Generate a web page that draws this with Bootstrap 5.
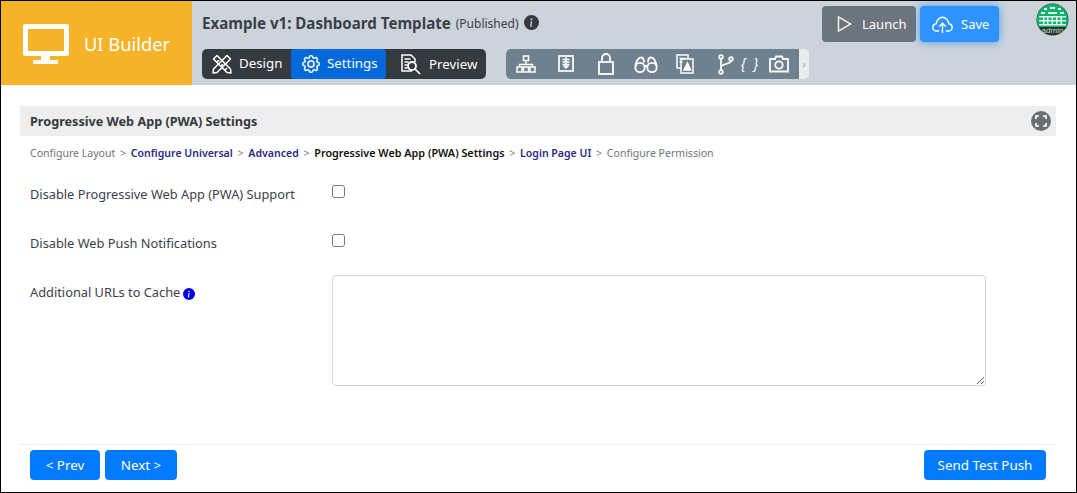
<!DOCTYPE html>
<html lang="en">
<head>
<meta charset="utf-8">
<title>UI Builder</title>
<link rel="stylesheet" href="https://cdn.jsdelivr.net/npm/bootstrap@5.3.0/dist/css/bootstrap.min.css">
<style>
html,body{height:100%;margin:0;overflow:hidden}
body{font-family:"Noto Sans","Open Sans",sans-serif;font-size:12.8px;color:#3b4148;background:#fff}
.app-frame{height:493px;border:1px solid #000;display:flex;flex-direction:column}
.top-head{height:84px;background:#cdd3da;display:flex;flex:none}
.brand-box{width:191px;background:#f4b328;color:#fff;font-size:18.3px;display:flex;align-items:center;gap:15px;padding-left:22px;padding-top:2px}
.head-main{flex:1;padding:0 0 0 10px;display:flex;flex-direction:column;position:relative}
.page-name{font-size:15.1px;font-weight:700;color:#3a4149;height:48px;padding-top:12px;line-height:20px;display:flex;align-items:flex-start;gap:5px}
.page-name small{font-weight:400;font-size:12px;line-height:22px}
.page-name svg{margin-top:2px;margin-left:0}
.tool-rows{display:flex;gap:20px}
.mode-tabs{display:flex;height:30px;background:#343a40;border-radius:5px;color:#fff;font-size:13.3px}
.mode-tab{display:flex;align-items:center;color:#fff;flex:none}
.tab-design{width:89px;padding-left:10px;gap:7px}
.tab-settings{width:95px;padding-left:11px;gap:7px;background:#0069d9;border-radius:3px}
.tab-preview{width:100px;padding-left:15px;gap:8px}
.tab-preview span{padding-top:2px}
.icon-strip{display:flex;height:30px}
.icon-body{width:293px;background:#6f818f;border-radius:5px 0 0 5px;display:flex;align-items:center;position:relative}
.icon-body>*{position:absolute}
.pos-a{left:10px}.pos-b{left:50px}.pos-c{left:91px}.pos-d{left:128px}.pos-e{left:169px}.pos-f{left:211px}.pos-h{left:263px}
.pos-g{left:235px;font-style:italic;font-size:14px;color:#fff;letter-spacing:2px;font-family:"Liberation Sans",sans-serif}
.strip-end{width:10px;background:#e9ecef;border-radius:0 5px 5px 0;color:#9aa3ab;font-size:11px;display:flex;align-items:center;justify-content:center}
.head-actions{position:absolute;top:5px;left:630px;display:flex;gap:4px}
.act-btn{height:36px;border:0;border-radius:4px;color:#fff;font-size:13px;display:flex;align-items:center;padding:0}
.act-btn span{padding-top:2px}
.act-launch{width:94px;background:#6c757d;gap:10px;padding-left:15px}
.act-save{width:79px;background:#2e93ff;gap:8px;padding-left:12px;box-shadow:0 0 8px rgba(0,123,255,.65)}
.avatar-wrap{position:absolute;top:2px;left:844px;width:33px;height:33px}
.body-area{flex:1;padding:21px 20px 0 19px;display:flex;flex-direction:column;min-height:0}
.sect-title{height:30px;background:#eee;font-weight:700;font-size:12.65px;color:#343a40;display:flex;align-items:center;justify-content:space-between;padding:0 5px 0 10px}
.sect-title span{padding-top:1px}
.crumbs{font-size:10.55px;padding:9px 10px 0;height:35px;line-height:15px;color:#6c757d;white-space:nowrap}
.crumbs a{color:#2b2a7f;text-decoration:none;font-weight:600}
.crumbs b{color:#111;font-weight:600;font-size:10.8px}
.crumbs i{font-style:normal;padding:0 2px;color:#777}
.form-line{display:flex;padding-left:10px}
.form-line>label{width:302px;flex:none;font-size:12.8px;line-height:18px;color:#3b4148}
.form-line .form-check-input{width:13px;height:13px;margin:0;border-color:#767676;border-radius:2.5px;display:block}
.line-one{height:49px;padding-top:14px}
.line-area{margin-top:6px}
.line-area>label{padding-top:8px}
.line-area>label svg{width:12px;height:12px;margin-left:-1px}
.form-line textarea{width:654px;height:111px;border:1px solid #ced4da;border-radius:4px;flex:none}
.foot-bar{margin-top:auto;border-top:1px solid #eee;height:48px;padding:5px 10px 0;display:flex;justify-content:space-between}
.foot-group{display:flex;gap:5px}
.foot-btn{background:#007bff;color:#fff;border:0;height:30px;border-radius:4px;font-size:13.4px;padding:0;line-height:30px}
.w-prev{width:70px}.w-next{width:72px}.w-send{width:122px}
</style>
</head>
<body>
<div class="app-frame">
  <header class="top-head">
    <div class="brand-box">
      <svg width="46" height="42" viewBox="0 0 46 42" fill="#fff"><path fill-rule="evenodd" d="M2 1h42a2 2 0 0 1 2 2v28a2 2 0 0 1-2 2H2a2 2 0 0 1-2-2V3a2 2 0 0 1 2-2zm3 5v22h36V6z"/><rect x="18" y="33" width="9" height="5"/><rect x="10" y="37" width="25" height="4" rx="1"/></svg>
      <span>UI Builder</span>
    </div>
    <div class="head-main">
      <div class="page-name"><span>Example v1: Dashboard Template</span> <small>(Published)</small>
        <svg width="15" height="15" viewBox="0 0 16 16" fill="#343a40"><path d="M8 16A8 8 0 1 0 8 0a8 8 0 0 0 0 16zm.93-9.41-1 4.7c-.07.34.03.53.3.53.2 0 .48-.07.68-.25l-.09.42c-.29.34-.92.58-1.46.58-.7 0-1-.42-.81-1.31l.74-3.47c.06-.29 0-.4-.29-.47l-.45-.08.08-.38 2.3-.27zM8 5.500a1 1 0 1 1 0-2 1 1 0 0 1 0 2z"/></svg>
      </div>
      <div class="tool-rows">
        <div class="mode-tabs">
          <div class="mode-tab tab-design">
            <svg width="20" height="20" viewBox="0 0 20 20" fill="none" stroke="#fff" stroke-width="1.500" stroke-linejoin="round"><path d="M1.500 5L5 1.500 18.500 15l.5 4-4-.5z"/><path d="M15 1.500L18.500 5 5 18.500l-4 .5.5-4z"/><path d="M5 8l2-2M9 12l2-2M13 16l2-2"/></svg>
            <span>Design</span>
          </div>
          <div class="mode-tab tab-settings">
            <svg width="18" height="18" viewBox="0 0 16 16" fill="#fff" stroke="#fff" stroke-width=".4"><path d="M8 4.754a3.246 3.246 0 1 0 0 6.492 3.246 3.246 0 0 0 0-6.492zM5.754 8a2.246 2.246 0 1 1 4.492 0 2.246 2.246 0 0 1-4.492 0z"/><path d="M9.796 1.343c-.527-1.79-3.065-1.79-3.592 0l-.094.319a.873.873 0 0 1-1.255.52l-.292-.16c-1.64-.892-3.433.902-2.54 2.541l.159.292a.873.873 0 0 1-.52 1.255l-.319.094c-1.79.527-1.79 3.065 0 3.592l.319.094a.873.873 0 0 1 .52 1.255l-.16.292c-.892 1.64.901 3.434 2.541 2.54l.292-.159a.873.873 0 0 1 1.255.52l.094.319c.527 1.79 3.065 1.79 3.592 0l.094-.319a.873.873 0 0 1 1.255-.52l.292.16c1.64.893 3.434-.902 2.54-2.541l-.159-.292a.873.873 0 0 1 .52-1.255l.319-.094c1.79-.527 1.79-3.065 0-3.592l-.319-.094a.873.873 0 0 1-.52-1.255l.16-.292c.893-1.64-.902-3.433-2.541-2.54l-.292.159a.873.873 0 0 1-1.255-.52l-.094-.319zm-2.633.283c.246-.835 1.428-.835 1.674 0l.094.319a1.873 1.873 0 0 0 2.693 1.115l.291-.16c.764-.415 1.6.42 1.184 1.185l-.159.292a1.873 1.873 0 0 0 1.116 2.692l.318.094c.835.246.835 1.428 0 1.674l-.319.094a1.873 1.873 0 0 0-1.115 2.693l.16.291c.415.764-.42 1.6-1.185 1.184l-.291-.159a1.873 1.873 0 0 0-2.693 1.116l-.094.318c-.246.835-1.428.835-1.674 0l-.094-.319a1.873 1.873 0 0 0-2.692-1.115l-.292.16c-.764.415-1.6-.42-1.184-1.185l.159-.291A1.873 1.873 0 0 0 1.945 8.93l-.319-.094c-.835-.246-.835-1.428 0-1.674l.319-.094A1.873 1.873 0 0 0 3.06 4.377l-.16-.292c-.415-.764.42-1.6 1.185-1.184l.292.159a1.873 1.873 0 0 0 2.692-1.115l.094-.319z"/></svg>
            <span>Settings</span>
          </div>
          <div class="mode-tab tab-preview">
            <svg width="20" height="21" viewBox="0 0 20 21" fill="none" stroke="#fff" stroke-width="1.500"><path d="M11 17H1V1h9l4 4v3"/><path d="M3.500 5h6M3.500 8h4M3.500 11h3M3.500 14h3" stroke-width="1.400"/><circle cx="11" cy="12" r="4" stroke-width="1.800"/><path d="M14 15l5 5" stroke-width="1.700"/></svg>
            <span>Preview</span>
          </div>
        </div>
        <div class="icon-strip">
          <div class="icon-body">
            <svg class="pos-a" width="20" height="20" viewBox="0 0 20 20" fill="none" stroke="#fff" stroke-width="1.500"><rect x="7.500" y="2" width="5" height="4.500"/><path d="M10 6.500v4M3.500 13v-2.500h13V13"/><rect x="1" y="13" width="5" height="5"/><rect x="7.500" y="13" width="5" height="5"/><rect x="14" y="13" width="5" height="5"/></svg>
            <svg class="pos-b" width="20" height="20" viewBox="0 0 20 20" fill="none" stroke="#fff" stroke-width="1.700"><rect x="3" y="2" width="14" height="15"/><path d="M6.500 5.500h7M6.500 8h7M6.500 10.500h7" stroke-width="1.300"/><path d="M10 3v11M7.500 11.500l2.500 2.500 2.500-2.500" stroke-width="1.500"/></svg>
            <svg class="pos-c" width="18" height="24" viewBox="0 0 18 24" fill="none" stroke="#fff" stroke-width="1.800"><rect x="2" y="10" width="14" height="12"/><path d="M5 10V6a4 4 0 0 1 8 0v4"/></svg>
            <svg class="pos-d" width="24" height="19" viewBox="0 0 24 19" fill="none" stroke="#fff" stroke-width="1.800"><circle cx="6" cy="12.500" r="4.700"/><circle cx="18" cy="12.500" r="4.700"/><path d="M10.500 11h3M1.500 11C2 7 4 2.500 7 2.500c2.500 0 3 1.500 3 5M22.500 11C22 7 20 2.500 17 2.500c-2.500 0-3 1.500-3 5"/></svg>
            <svg class="pos-e" width="20" height="20" viewBox="0 0 20 20" fill="none" stroke="#fff" stroke-width="1.500"><path d="M13 5V1H2v13h4"/><rect x="6" y="5" width="12" height="14"/><path d="M4.500 4.500h6M4.500 8h3"/><path d="M9 16l3.500-7 3 7z" fill="#fff"/></svg>
            <svg class="pos-f" width="18" height="21" viewBox="0 0 18 21" fill="none" stroke="#fff" stroke-width="1.700"><circle cx="4" cy="3" r="1.800"/><circle cx="4" cy="18" r="1.800"/><circle cx="14" cy="5" r="1.800"/><path d="M4 5v11M4 13c0-3 10-3 10-6"/></svg>
            <span class="pos-g">{ }</span>
            <svg class="pos-h" width="20" height="18" viewBox="0 0 20 18" fill="none" stroke="#fff" stroke-width="1.800"><path d="M1 4h5l1-2.500h6L14 4h5v12.500H1z"/><circle cx="10" cy="10" r="3.700"/></svg>
          </div>
          <div class="strip-end">&rsaquo;</div>
        </div>
      </div>
      <div class="head-actions">
        <button type="button" class="act-btn act-launch">
          <svg width="15" height="18" viewBox="0 0 15 18" fill="none" stroke="#fff" stroke-width="1.400"><path d="M1.500 2v14l12-7z"/></svg>
          <span>Launch</span>
        </button>
        <button type="button" class="act-btn act-save">
          <svg width="21" height="17" viewBox="0 0 16 13" fill="none" stroke="#fff" stroke-width="1.100"><path d="M5.500 11.500H3.600C2 11.500.6 10.300.6 8.700c0-1.500 1.100-2.600 2.600-2.800C3.500 3.200 5.500 1 8 1s4.500 2.200 4.800 4.900c1.500.2 2.600 1.300 2.600 2.800 0 1.600-1.400 2.800-3 2.800h-1.900"/><path d="M8 13V5.500M5.500 8L8 5.500 10.500 8"/></svg>
          <span>Save</span>
        </button>
      </div>
      <div class="avatar-wrap">
        <svg width="33" height="33" viewBox="0 0 33 33"><defs><clipPath id="avc"><circle cx="16.500" cy="16.500" r="15.500"/></clipPath></defs><circle cx="16.500" cy="16.500" r="16" fill="#2c3a35"/><g clip-path="url(#avc)"><rect width="33" height="25" fill="#0fb36b"/><path d="M8 5h3v2H8zM14 4h5v2h-5zM22 5h3v2h-3zM5 9h4v2H5zM12 9h9v2h-9zM24 9h4v2h-4zM3 13h27v1.500H3zM3 17h27v1.500H3zM3 21h27v1.500H3z" fill="#e4f8ed"/><path d="M7 13h1.500v9H7zM11 13h1.500v9H11zM15.500 13H17v9h-1.500zM20 13h1.500v9H20zM24.500 13H26v9h-1.500z" fill="#e4f8ed"/><rect y="24" width="33" height="9" fill="#26352f"/></g><text x="16.500" y="29.500" text-anchor="middle" font-size="8" fill="#cfd6d2" font-family="Liberation Sans">admin</text></svg>
      </div>
    </div>
  </header>
  <main class="body-area">
    <div class="sect-title">
      <span>Progressive Web App (PWA) Settings</span>
      <svg width="20" height="20" viewBox="0 0 20 20" fill="none"><circle cx="10" cy="10" r="10" fill="#6c6f72"/><path d="M5 8V5h3M12 5h3v3M15 12v3h-3M8 15H5v-3" stroke="#fff" stroke-width="1.700"/></svg>
    </div>
    <div class="crumbs">Configure Layout <i>&gt;</i> <a href="#">Configure Universal</a> <i>&gt;</i> <a href="#">Advanced</a> <i>&gt;</i> <b>Progressive Web App (PWA) Settings</b> <i>&gt;</i> <a href="#">Login Page UI</a> <i>&gt;</i> Configure Permission</div>
    <div class="form-line line-one"><label for="c1">Disable Progressive Web App (PWA) Support</label><input id="c1" class="form-check-input" type="checkbox"></div>
    <div class="form-line line-one"><label for="c2">Disable Web Push Notifications</label><input id="c2" class="form-check-input" type="checkbox"></div>
    <div class="form-line line-area">
      <label for="t1">Additional URLs to Cache
        <svg width="12" height="12" viewBox="0 0 16 16" fill="#0000e6"><path d="M8 16A8 8 0 1 0 8 0a8 8 0 0 0 0 16zm.93-9.41-1 4.7c-.07.34.03.53.3.53.2 0 .48-.07.68-.25l-.09.42c-.29.34-.92.58-1.46.58-.7 0-1-.42-.81-1.31l.74-3.47c.06-.29 0-.4-.29-.47l-.45-.08.08-.38 2.3-.27zM8 5.500a1 1 0 1 1 0-2 1 1 0 0 1 0 2z"/></svg>
      </label>
      <textarea id="t1" class="form-control"></textarea>
    </div>
    <div class="foot-bar">
      <div class="foot-group">
        <button type="button" class="foot-btn w-prev">&lt; Prev</button>
        <button type="button" class="foot-btn w-next">Next &gt;</button>
      </div>
      <button type="button" class="foot-btn w-send">Send Test Push</button>
    </div>
  </main>
</div>
<script src="https://cdn.jsdelivr.net/npm/bootstrap@5.3.0/dist/js/bootstrap.bundle.min.js"></script>
</body>
</html>
